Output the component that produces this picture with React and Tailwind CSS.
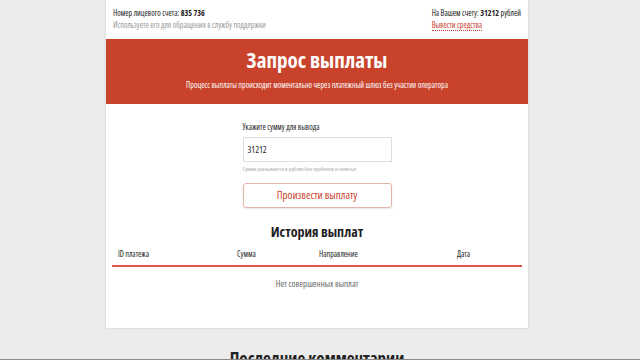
export default function App() {
  const font = { fontFamily: '"Open Sans", sans-serif', fontStretch: '75%' };

  return (
    <div className="w-[640px] h-[360px] overflow-hidden bg-[#ececec] text-[#222] antialiased border-b border-[#8a8a8a]" style={font}>
      <div className="ml-[106px] w-[422px] bg-white shadow-[0_0_2px_rgba(0,0,0,0.15)]">
        {/* Account info */}
        <div className="flex justify-between px-[7px] pt-[7px] h-[39px] text-[8px] leading-[12px]">
          <div>
            <p>Номер лицевого счета: <b>835 736</b></p>
            <p className="text-[#999]">Используете его для обращения в службу поддержки</p>
          </div>
          <div>
            <p>На Вашем счету: <b>31212</b> рублей</p>
            <a className="text-[#c9432c] border-b border-dotted border-[#c9432c]">Вывести средства</a>
          </div>
        </div>

        {/* Header */}
        <div className="bg-[#c9432c] h-[65px] flex flex-col items-center text-white">
          <h1 className="mt-[7px] text-[21px] leading-[28px] font-bold">Запрос выплаты</h1>
          <p className="mt-[5px] text-[8px]">Процесс выплаты происходит моментально через платежный шлюз без участия оператора</p>
        </div>

        {/* Form */}
        <div className="w-[149px] mx-auto pt-[17px]">
          <label className="block text-[8px] leading-[12px]">Укажите сумму для вывода</label>
          <div className="mt-[4px] h-[25px] border border-[#ddd] flex items-center px-[4px] text-[9px]">31212</div>
          <p className="mt-[3px] text-[6px] leading-[9px] text-[#aaa] whitespace-nowrap">Сумма указывается в рублях без пробелов и запятых</p>
          <button className="mt-[9px] w-full h-[25px] border border-[#e3b3aa] rounded-[3px] text-[11px] text-[#c9432c] shadow-[0_1px_2px_rgba(0,0,0,0.1)]">
            Произвести выплату
          </button>
        </div>

        {/* History */}
        <h2 className="mt-[15px] text-center text-[14px] font-bold leading-[18px]">История выплат</h2>
        <div className="mx-[6px] mt-[7px]">
          <div className="grid grid-cols-[119px_82px_138px_1fr] px-[6px] pb-[6px] text-[8px] leading-[11px] border-b-2 border-[#e0544a]">
            <span>ID платежа</span>
            <span>Сумма</span>
            <span>Направление</span>
            <span>Дата</span>
          </div>
          <p className="text-center text-[9px] leading-[12px] text-[#666] pt-[11px] pb-[38px]">Нет совершенных выплат</p>
        </div>
      </div>

      <h2 className="mt-[20px] text-center text-[17px] font-bold leading-[22px] text-[#222] pr-[6px]">Последние комментарии</h2>
    </div>
  );
}
